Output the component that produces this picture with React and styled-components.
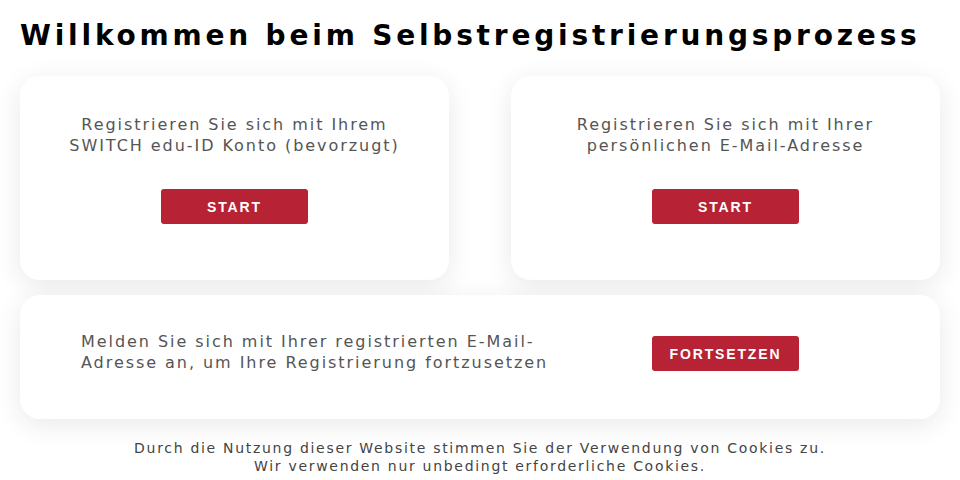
import React from "react";
import styled, { createGlobalStyle } from "styled-components";

const Global = createGlobalStyle`
  html, body { margin: 0; padding: 0; background: #ffffff; }
  body { font-family: "DejaVu Sans", Verdana, sans-serif; }
`;

const Page = styled.div`
  padding: 18px 20px 0 20px;
  display: flex;
  flex-direction: column;
`;

const Title = styled.h1`
  margin: 0 0 22px 0;
  font-family: "DejaVu Sans", Verdana, sans-serif;
  font-weight: bold;
  font-size: 28px;
  line-height: 36px;
  letter-spacing: 3.8px;
  color: #000;
  white-space: nowrap;
`;

const Row = styled.div`
  display: grid;
  grid-template-columns: 1fr 1fr;
  column-gap: 62px;
`;

const Card = styled.div`
  background: #fff;
  border-radius: 20px;
  box-shadow: 0 6px 28px rgba(0, 0, 0, 0.09);
`;

const OptionCard = styled(Card)`
  height: 204px;
  box-sizing: border-box;
  padding: 38px 20px 0 20px;
  display: flex;
  flex-direction: column;
  align-items: center;
`;

const Text = styled.p`
  margin: 0;
  font-size: 16px;
  line-height: 21px;
  letter-spacing: 1.95px;
  color: #555;
  text-align: ${(p) => (p.$left ? "left" : "center")};
`;

const Button = styled.button`
  width: 147px;
  height: 35px;
  border: none;
  border-radius: 3px;
  background: #b72234;
  color: #fff;
  font-family: "Liberation Sans", Arial, sans-serif;
  font-weight: bold;
  font-size: 14px;
  letter-spacing: 1.85px;
  cursor: pointer;
  padding: 0;
  margin-top: ${(p) => p.$mt || 0}px;
`;

const ContinueCard = styled(Card)`
  margin-top: 15px;
  height: 124px;
  box-sizing: border-box;
  padding: 0 44px 0 61px;
  display: flex;
  align-items: center;
`;

const ContinueText = styled.div`
  width: 474px;
  margin-top: -10px;
`;

const ButtonCell = styled.div`
  flex: 1;
  display: flex;
  justify-content: center;
  margin-top: -7px;
`;

const Footer = styled.footer`
  margin-top: 20px;
  text-align: center;
  font-size: 14px;
  line-height: 18px;
  letter-spacing: 1.7px;
  color: #444;
`;

export default function App() {
  return (
    <>
      <Global />
      <Page>
        <Title>Willkommen beim Selbstregistrierungsprozess</Title>
        <Row>
          <OptionCard>
            <Text>
              Registrieren Sie sich mit Ihrem
              <br />
              SWITCH edu-ID Konto (bevorzugt)
            </Text>
            <Button $mt={33}>START</Button>
          </OptionCard>
          <OptionCard>
            <Text>
              Registrieren Sie sich mit Ihrer
              <br />
              persönlichen E-Mail-Adresse
            </Text>
            <Button $mt={33}>START</Button>
          </OptionCard>
        </Row>
        <ContinueCard>
          <ContinueText>
            <Text $left>
              Melden Sie sich mit Ihrer registrierten E-Mail-Adresse an, um Ihre Registrierung fortzusetzen
            </Text>
          </ContinueText>
          <ButtonCell>
            <Button>FORTSETZEN</Button>
          </ButtonCell>
        </ContinueCard>
        <Footer>
          Durch die Nutzung dieser Website stimmen Sie der Verwendung von Cookies zu.
          <br />
          Wir verwenden nur unbedingt erforderliche Cookies.
        </Footer>
      </Page>
    </>
  );
}
